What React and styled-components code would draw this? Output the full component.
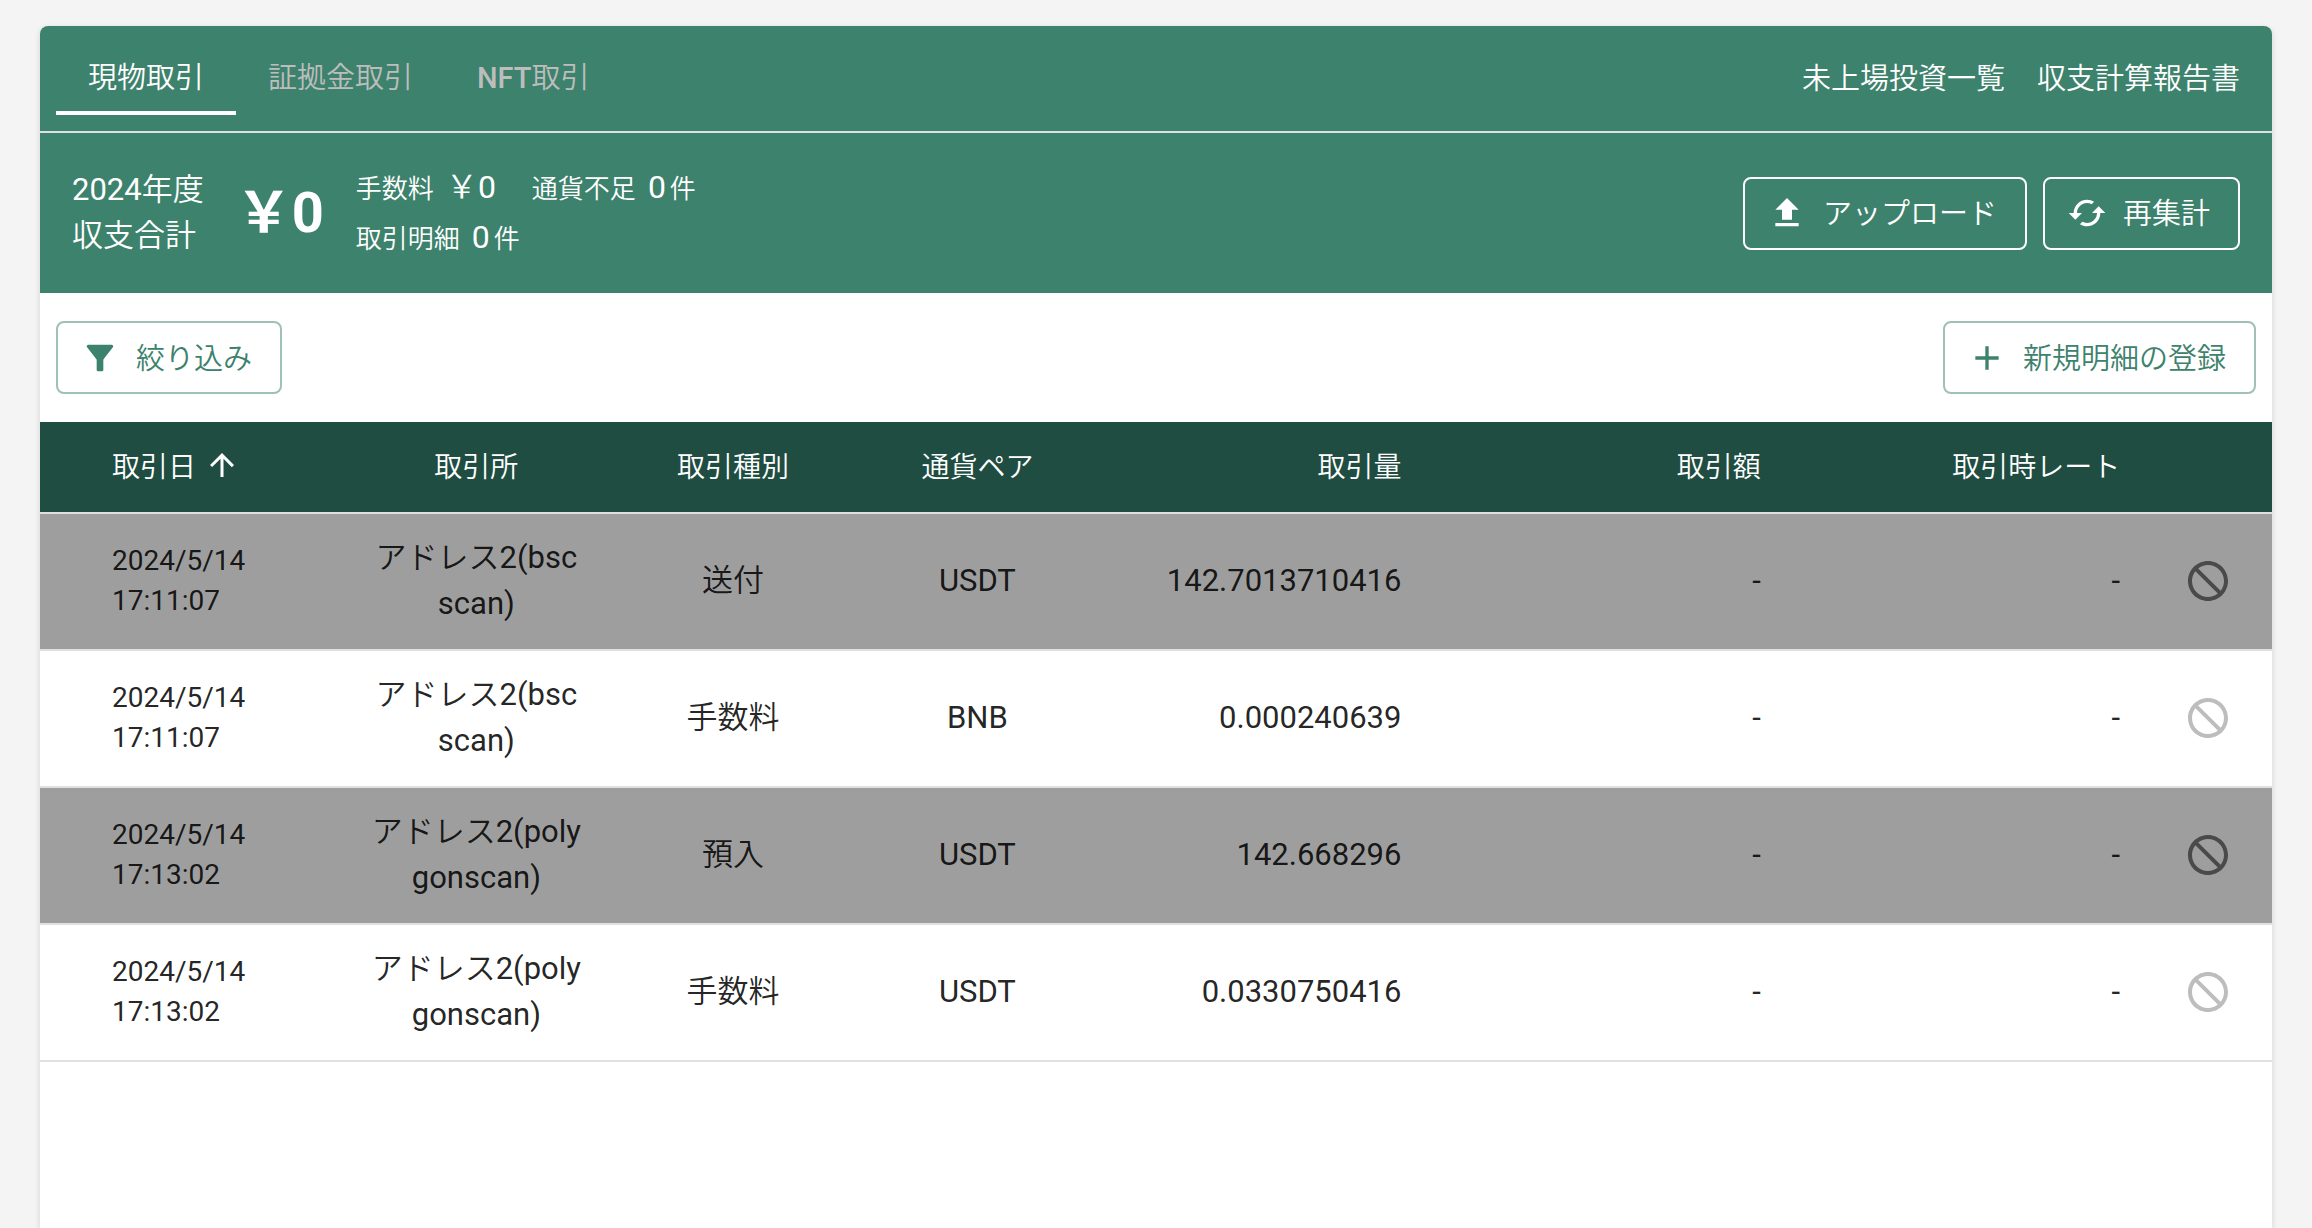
import React from "react";
import styled, { createGlobalStyle } from "styled-components";

const font = 'Roboto, "Noto Sans CJK JP", sans-serif';

const GlobalStyle = createGlobalStyle`
  *, *::before, *::after { box-sizing: border-box; }
  body { margin: 0; background: #f4f4f4; font-family: ${font}; color: rgba(0, 0, 0, 0.87); }
  button { font: inherit; }
`;

const Page = styled.main`
  display: flex;
  min-height: 100vh;
  padding: 26px 40px 0;
`;

const Card = styled.section`
  flex: 1;
  min-width: 0;
  background: #fff;
  border-radius: 8px 8px 0 0;
  box-shadow: 0 2px 6px rgba(0, 0, 0, 0.14);
  overflow: hidden;
`;

const Header = styled.header`
  background: #3d826c;
  color: #fff;
`;

const TopBar = styled.div`
  display: flex;
  align-items: flex-start;
  justify-content: space-between;
  height: 107px;
  padding: 0 32px 0 16px;
  border-bottom: 2px solid #e0e0e0;
`;

const Tabs = styled.nav`
  display: flex;
`;

const Tab = styled.button`
  height: 89px;
  padding: 12px 32px 0;
  border: 0;
  border-bottom: 4px solid ${(p) => (p.$active ? "#fff" : "transparent")};
  background: none;
  color: ${(p) => (p.$active ? "#fff" : "#bdbdbd")};
  font-size: 29px;
  font-weight: ${(p) => (p.$bold ? 500 : 350)};
  white-space: nowrap;
`;

const Ja = styled.span`
  font-weight: 350;
`;

const Links = styled.div`
  display: flex;
  align-items: center;
  gap: 32px;
  height: 105px;
  padding-bottom: 6px;
`;

const TopLink = styled.a`
  color: inherit;
  font-size: 29px;
  font-weight: 350;
  text-decoration: none;
`;

const Summary = styled.div`
  display: flex;
  align-items: center;
  justify-content: space-between;
  height: 160px;
  padding: 0 32px;
`;

const Totals = styled.div`
  display: flex;
  align-items: center;
  gap: 32px;
`;

const Title = styled.h1`
  margin: 0;
  font-size: 31px;
  font-weight: 400;
  line-height: 46px;
`;

const Amount = styled.strong`
  font-size: 56px;
  font-weight: 700;
  line-height: 64px;
`;

const Stats = styled.div`
  display: grid;
  font-size: 26px;
  font-weight: 350;
  line-height: 48px;
`;

const StatLine = styled.div`
  display: flex;
  gap: 32px;
`;

const Value = styled.span`
  margin: 0 4px 0 12px;
  font-size: 32px;
  font-weight: 400;
`;

const Actions = styled.div`
  display: flex;
  gap: 16px;
`;

const Button = styled.button`
  display: inline-flex;
  align-items: center;
  gap: 16px;
  height: 73px;
  padding: 0 28px 0 22px;
  border: 2px solid ${(p) => (p.$onDark ? "#fff" : "#9ec0b5")};
  border-radius: 8px;
  background: none;
  color: ${(p) => (p.$onDark ? "#fff" : "#3d826c")};
  font-size: 29px;
  font-weight: 350;
  white-space: nowrap;
`;

const Label = styled.span`
  padding-bottom: 4px;
`;

const Icon = styled.svg`
  flex: none;
  width: ${(p) => p.$size}px;
  height: ${(p) => p.$size}px;
  fill: currentColor;
`;

const Toolbar = styled.div`
  display: flex;
  align-items: center;
  justify-content: space-between;
  height: 129px;
  padding: 0 16px;
`;

const Table = styled.table`
  width: 100%;
  border-collapse: separate;
  border-spacing: 0;
  table-layout: fixed;
`;

const Col = styled.col`
  width: ${(p) => p.$width || "auto"};
`;

const Th = styled.th`
  height: 92px;
  padding: 0 0 4px ${(p) => p.$left || 0}px;
  border-bottom: 2px solid #e0e0e0;
  background: #204d42;
  color: #fff;
  font-size: 28px;
  font-weight: 350;
  text-align: ${(p) => p.$align || "center"};
`;

const SortLabel = styled.span`
  display: inline-flex;
  align-items: center;
  gap: 8px;
`;

const Row = styled.tr`
  background: ${(p) => (p.$excluded ? "#9e9e9e" : "#fff")};
`;

const Td = styled.td`
  height: 137px;
  padding: 0 0 2px ${(p) => p.$left || 0}px;
  border-bottom: 2px solid #e0e0e0;
  font-size: 31px;
  font-weight: 400;
  line-height: 46px;
  text-align: ${(p) => p.$align || "center"};
`;

const DateTd = styled(Td)`
  font-size: 28px;
  line-height: 40px;
`;

const BanButton = styled.button`
  display: inline-flex;
  padding: 0;
  border: 0;
  background: none;
  color: ${(p) => (p.$excluded ? "#4a4a4a" : "#bdbdbd")};
  vertical-align: middle;
`;

const paths = {
  upload: "M5 20h14v-2H5v2zm0-10h4v6h6v-6h4l-7-7-7 7z",
  add: "M19 13h-6v6h-2v-6H5v-2h6V5h2v6h6v2z",
  filter: "M4.25 5.61C6.27 8.2 10 13 10 13v6c0 .55.45 1 1 1h2c.55 0 1-.45 1-1v-6s3.72-4.8 5.74-7.39c.51-.66.04-1.61-.79-1.61H5.04c-.83 0-1.3.95-.79 1.61z",
  arrow: "M4 12l1.41 1.41L11 7.83V20h2V7.83l5.58 5.59L20 12l-8-8-8 8z",
  ban: "M12 2C6.48 2 2 6.48 2 12s4.48 10 10 10 10-4.48 10-10S17.52 2 12 2zM4 12c0-4.42 3.58-8 8-8 1.85 0 3.55.63 4.9 1.69L5.69 16.9C4.63 15.55 4 13.85 4 12zm8 8c-1.85 0-3.55-.63-4.9-1.69L18.31 7.1C19.37 8.45 20 10.15 20 12c0 4.42-3.58 8-8 8z",
  sync: "M19 8l-4 4h3c0 3.31-2.69 6-6 6-1.01 0-1.97-.25-2.8-.7l-1.46 1.46C8.97 19.54 10.43 20 12 20c4.42 0 8-3.58 8-8h3l-4-4zM6 12c0-3.31 2.69-6 6-6 1.01 0 1.97.25 2.8.7l1.46-1.46C15.03 4.46 13.57 4 12 4c-4.42 0-8 3.58-8 8H1l4 4 4-4H6z",
};

function Glyph({ name, size = 40, flip }) {
  return (
    <Icon viewBox="0 0 24 24" $size={size} aria-hidden="true">
      <path d={paths[name]} transform={flip ? "matrix(-1 0 0 1 24 0)" : undefined} />
    </Icon>
  );
}

function IconButton({ icon, onDark, children }) {
  return (
    <Button type="button" $onDark={onDark}>
      <Glyph name={icon} />
      <Label>{children}</Label>
    </Button>
  );
}

const columns = ["14%", "11.1%", "11.9%", "10%", "14%", "16.1%", "16.1%", "auto"];

const rows = [
  { day: "2024/5/14", time: "17:11:07", place: ["2(bsc", "scan)"], kind: "送付", pair: "USDT", amount: "142.7013710416", excluded: true },
  { day: "2024/5/14", time: "17:11:07", place: ["2(bsc", "scan)"], kind: "手数料", pair: "BNB", amount: "0.000240639" },
  { day: "2024/5/14", time: "17:13:02", place: ["2(poly", "gonscan)"], kind: "預入", pair: "USDT", amount: "142.668296", excluded: true },
  { day: "2024/5/14", time: "17:13:02", place: ["2(poly", "gonscan)"], kind: "手数料", pair: "USDT", amount: "0.0330750416" },
];

export default function App() {
  return (
    <Page lang="ja">
      <GlobalStyle />
      <Card>
        <Header>
          <TopBar>
            <Tabs>
              <Tab type="button" $active>現物取引</Tab>
              <Tab type="button">証拠金取引</Tab>
              <Tab type="button" $bold>NFT<Ja>取引</Ja></Tab>
            </Tabs>
            <Links>
              <TopLink href="#unlisted">未上場投資一覧</TopLink>
              <TopLink href="#report">収支計算報告書</TopLink>
            </Links>
          </TopBar>
          <Summary>
            <Totals>
              <Title>2024<Ja>年度<br />収支合計</Ja></Title>
              <Amount>￥0</Amount>
              <Stats>
                <StatLine>
                  <span>手数料<Value><Ja>￥</Ja>0</Value></span>
                  <span>通貨不足<Value>0</Value>件</span>
                </StatLine>
                <StatLine>
                  <span>取引明細<Value>0</Value>件</span>
                </StatLine>
              </Stats>
            </Totals>
            <Actions>
              <IconButton onDark icon="upload">アップロード</IconButton>
              <IconButton onDark icon="sync">再集計</IconButton>
            </Actions>
          </Summary>
        </Header>
        <Toolbar>
          <IconButton icon="filter">絞り込み</IconButton>
          <IconButton icon="add">新規明細の登録</IconButton>
        </Toolbar>
        <Table>
          <colgroup>
            {columns.map((width, i) => <Col key={i} $width={width} />)}
          </colgroup>
          <thead>
            <tr>
              <Th $align="left" $left={72} aria-sort="ascending">
                <SortLabel>取引日<Glyph name="arrow" size={36} /></SortLabel>
              </Th>
              <Th>取引所</Th>
              <Th>取引種別</Th>
              <Th>通貨ペア</Th>
              <Th $align="right">取引量</Th>
              <Th $align="right">取引額</Th>
              <Th $align="right">取引時レート</Th>
              <Th aria-label="集計対象" />
            </tr>
          </thead>
          <tbody>
            {rows.map((r, i) => (
              <Row key={i} $excluded={r.excluded}>
                <DateTd $align="left" $left={72}>{r.day}<br />{r.time}</DateTd>
                <Td><Ja>アドレス</Ja>{r.place[0]}<br />{r.place[1]}</Td>
                <Td><Ja>{r.kind}</Ja></Td>
                <Td>{r.pair}</Td>
                <Td $align="right">{r.amount}</Td>
                <Td $align="right">-</Td>
                <Td $align="right">-</Td>
                <Td $left={24}>
                  <BanButton type="button" $excluded={r.excluded} aria-label="集計から除外">
                    <Glyph name="ban" size={48} flip />
                  </BanButton>
                </Td>
              </Row>
            ))}
          </tbody>
        </Table>
      </Card>
    </Page>
  );
}
